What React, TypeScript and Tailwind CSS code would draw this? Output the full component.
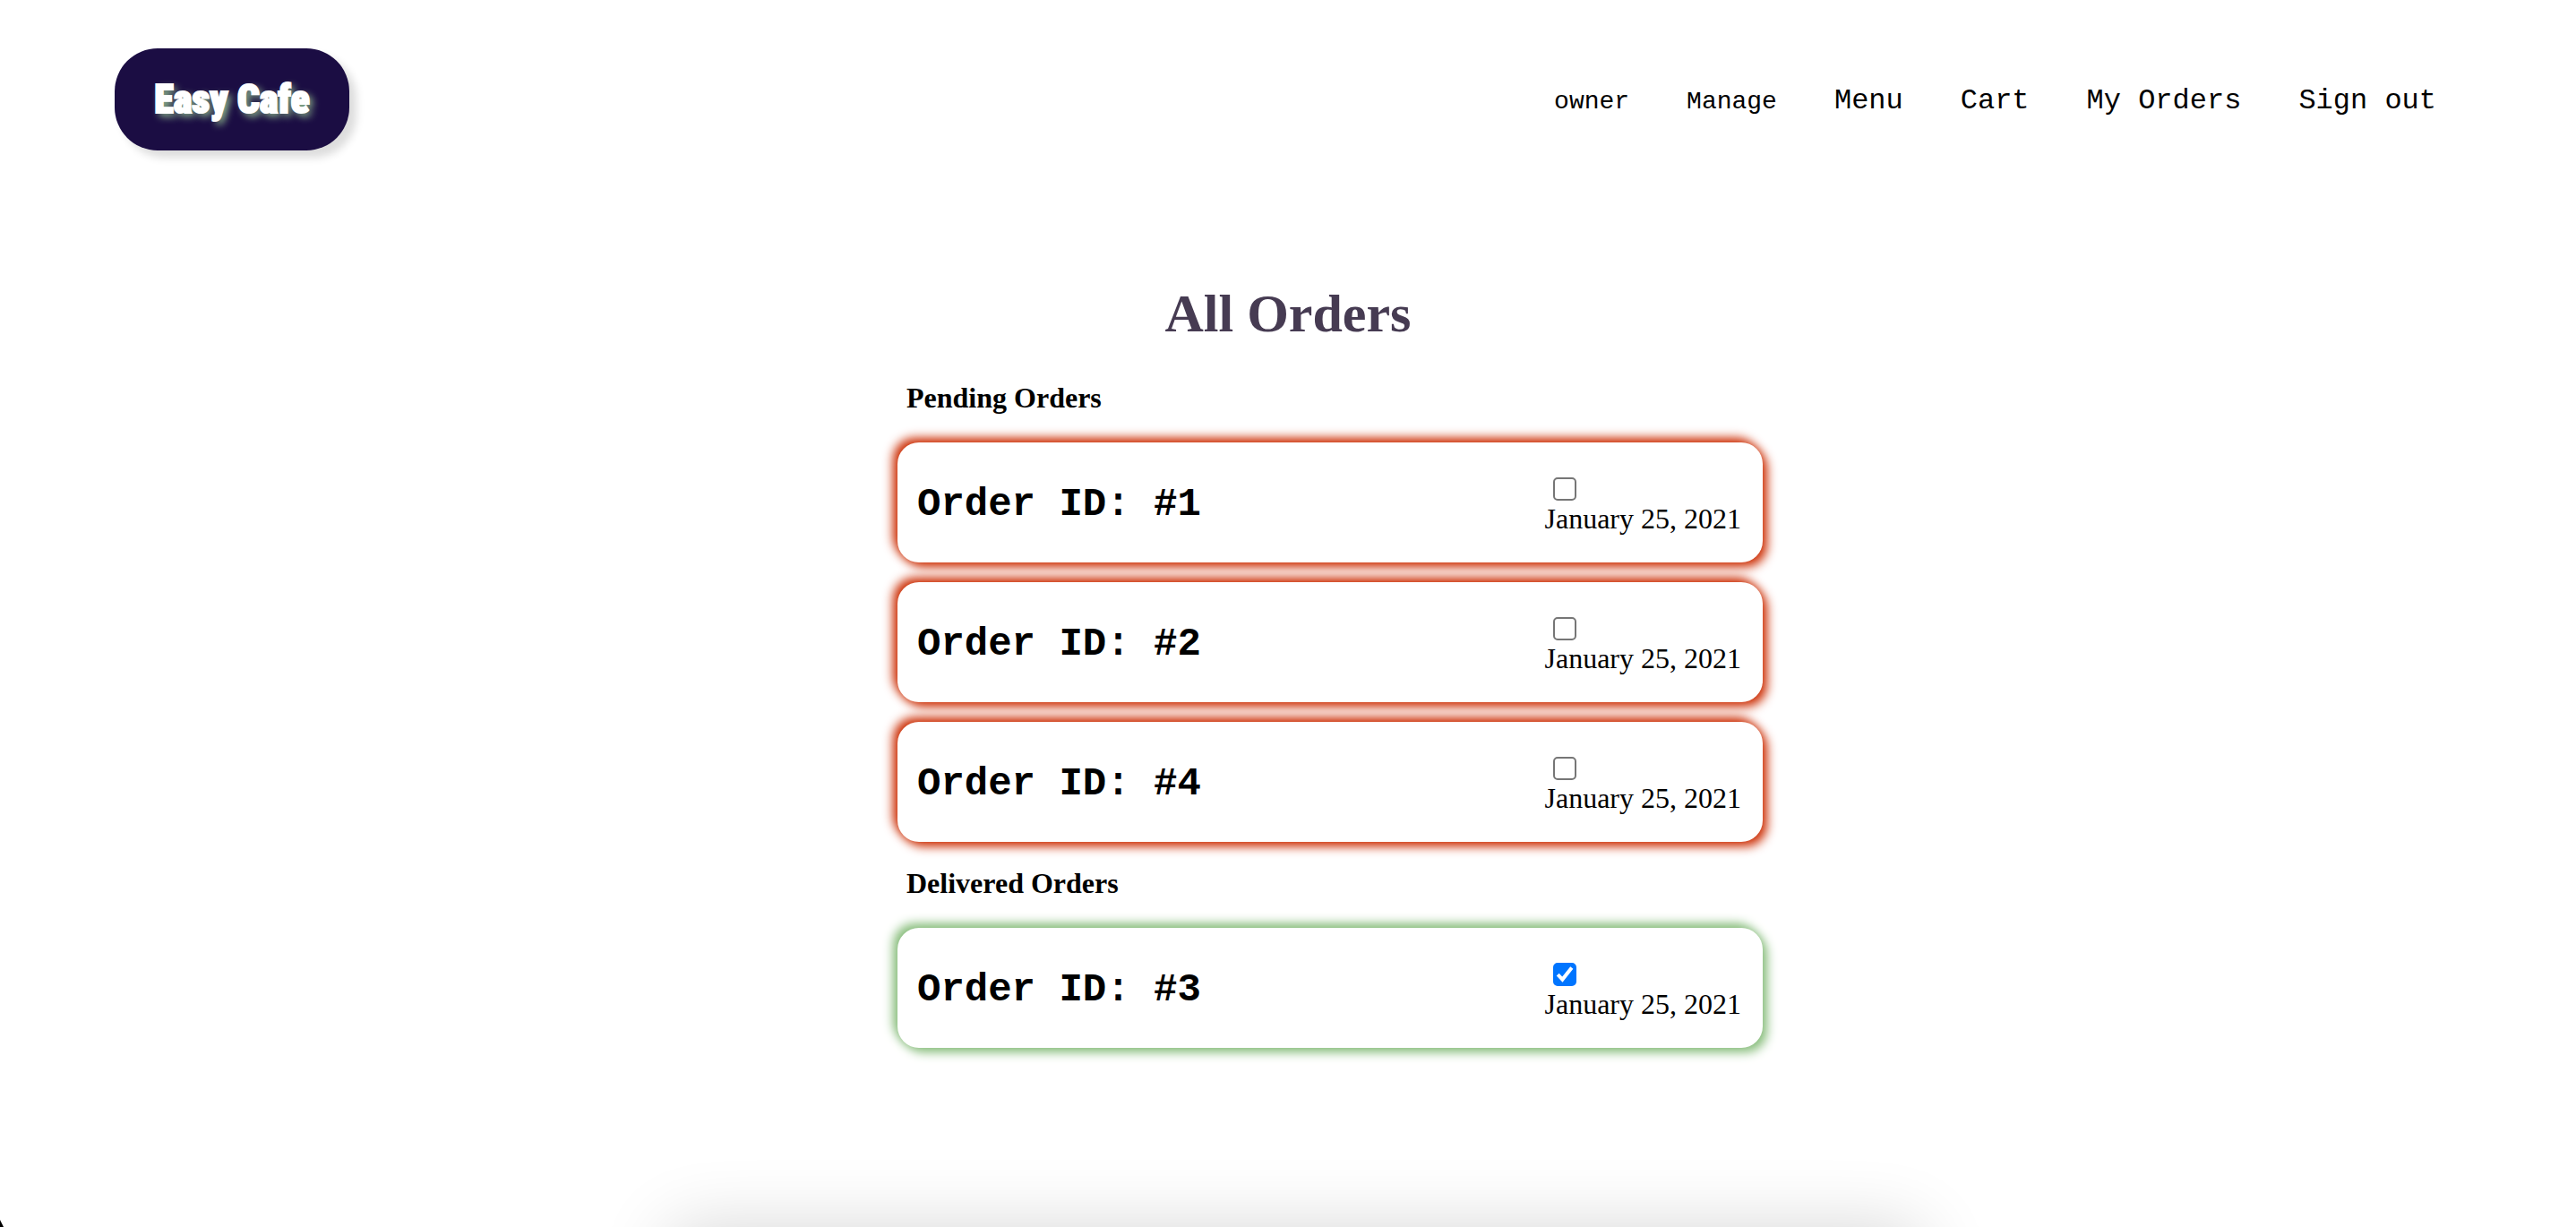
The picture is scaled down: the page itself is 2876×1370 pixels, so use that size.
import { useState } from "react";

type Order = { id: number; date: string; delivered: boolean };

const initialOrders: Order[] = [
  { id: 1, date: "January 25, 2021", delivered: false },
  { id: 2, date: "January 25, 2021", delivered: false },
  { id: 4, date: "January 25, 2021", delivered: false },
  { id: 3, date: "January 25, 2021", delivered: true },
];

const smallLinks = ["owner", "Manage"];
const links = ["Menu", "Cart", "My Orders", "Sign out"];

function Header() {
  return (
    <header className="flex items-center justify-between pt-[54px] pr-[156px] pl-32">
      <a
        href="#"
        className="flex h-[114px] w-[262px] items-center justify-center rounded-[48px] bg-[#1b0d43] font-['Impact','Roboto_Condensed','Liberation_Sans_Narrow',sans-serif] text-[44px] font-black text-white shadow-[8px_8px_10px_#dddddd] [-webkit-text-stroke:2px_white] [text-shadow:4px_4px_8px_#98c793]"
      >
        Easy Cafe
      </a>
      <nav className="flex items-baseline gap-16 pt-1 font-['Courier_New','Liberation_Mono',monospace] text-black">
        {smallLinks.map((label) => (
          <a key={label} href="#" className="text-[28px] leading-9">
            {label}
          </a>
        ))}
        {links.map((label) => (
          <a key={label} href="#" className="text-[32px] leading-9">
            {label}
          </a>
        ))}
      </nav>
    </header>
  );
}

function OrderCard({ order, onToggle }: { order: Order; onToggle: () => void }) {
  const glow = order.delivered
    ? "shadow-[5px_5px_12px_#88bd7c,-5px_-5px_12px_#88bd7c]"
    : "shadow-[5px_5px_12px_#cc2e04,-5px_-5px_12px_#cc2e04]";
  return (
    <li className={`flex h-[134px] items-center justify-between rounded-3xl bg-white pt-2 pr-6 pl-[22px] ${glow}`}>
      <h3 className="pb-1 font-['Courier_New','Liberation_Mono',monospace] text-[44px] leading-[52px] font-bold">
        Order ID: #{order.id}
      </h3>
      <div className="flex flex-col gap-0.5">
        <label className="relative ml-2.5 size-[26px]">
          <input
            type="checkbox"
            aria-label={`Order ${order.id} delivered`}
            checked={order.delivered}
            onChange={onToggle}
            className="peer block size-[26px] appearance-none rounded-[5px] border-2 border-[#767676] bg-white checked:border-[#0075ff] checked:bg-[#0075ff]"
          />
          <svg
            viewBox="0 0 26 26"
            className="pointer-events-none absolute inset-0 hidden size-[26px] peer-checked:block"
            fill="none"
            stroke="white"
            strokeWidth="4"
          >
            <path d="M5.2 13.2 10.4 18.6 20.8 5.4" />
          </svg>
        </label>
        <time className="text-[32px] leading-9">{order.date}</time>
      </div>
    </li>
  );
}

export default function App() {
  const [orders, setOrders] = useState(initialOrders);
  const toggle = (id: number) =>
    setOrders(orders.map((o) => (o.id === id ? { ...o, delivered: !o.delivered } : o)));

  const groups = [
    { title: "Pending Orders", items: orders.filter((o) => !o.delivered) },
    { title: "Delivered Orders", items: orders.filter((o) => o.delivered) },
  ];

  return (
    <div className="relative flex min-h-screen flex-col overflow-hidden bg-white font-['Liberation_Serif','Times_New_Roman',serif] text-black">
      <Header />
      <main className="flex flex-col items-center pt-[146px]">
        <h1 className="text-[60px] leading-[72px] font-bold text-[#463b52]">All Orders</h1>
        <div className="ml-[94px] flex w-[966px] flex-col gap-7 pt-10">
          {groups.map((group) => (
            <section key={group.title}>
              <h2 className="mb-8 ml-2.5 text-[32px] leading-9 font-bold">{group.title}</h2>
              <ul className="flex flex-col gap-[22px]">
                {group.items.map((order) => (
                  <OrderCard key={order.id} order={order} onToggle={() => toggle(order.id)} />
                ))}
              </ul>
            </section>
          ))}
        </div>
      </main>
      <div className="absolute top-full left-1/2 h-40 w-[1400px] -translate-x-1/2 rounded-3xl shadow-[8px_0_80px_rgba(0,0,0,0.16)]" />
      <div className="absolute bottom-0 left-0 h-2 w-1 bg-black [clip-path:polygon(0_0,100%_100%,0_100%)]" />
    </div>
  );
}
